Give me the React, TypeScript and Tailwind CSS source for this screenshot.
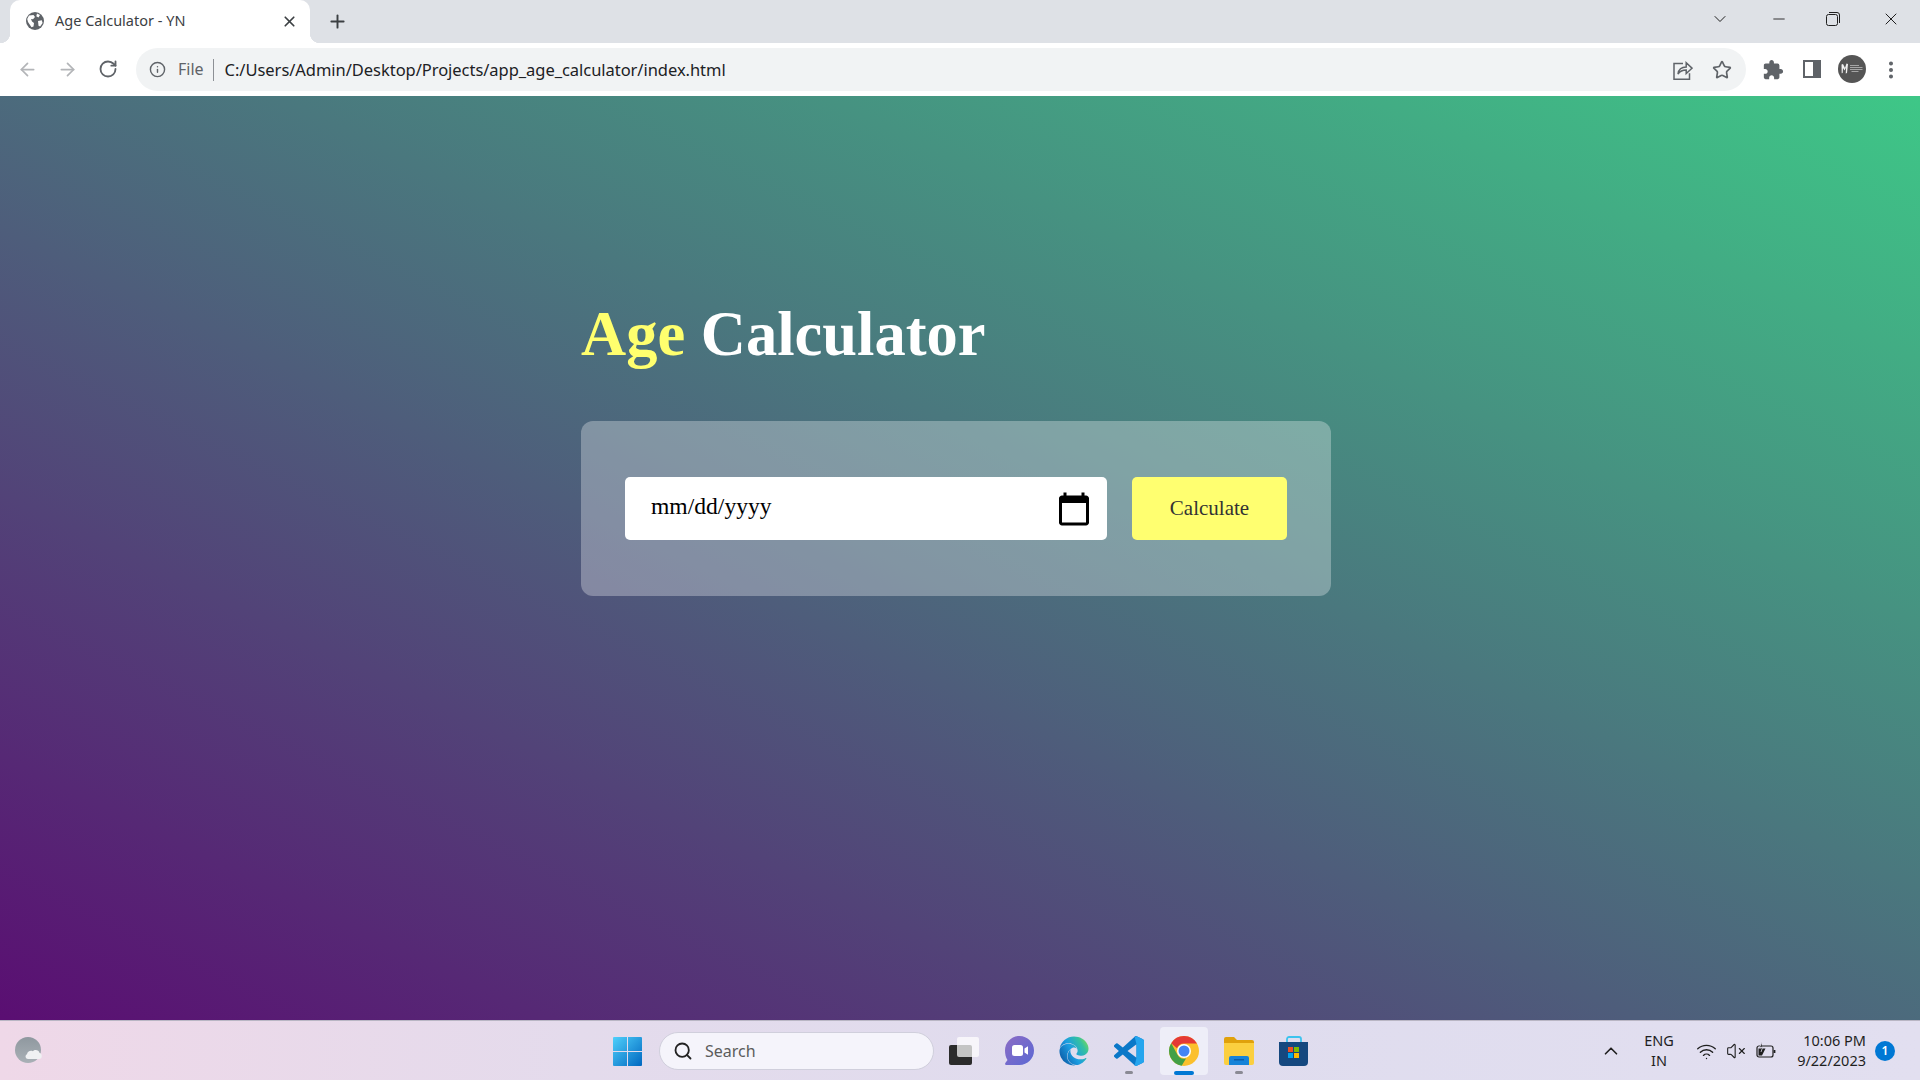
import { ArrowLeft, ArrowRight, ChevronDown, ChevronUp, Info, Minus, MoreVertical, Plus, RotateCw, Search, Star, VolumeX, Wifi, X } from 'lucide-react';
import { FaEdge } from 'react-icons/fa';

const uiFont = 'font-["Noto_Sans",sans-serif]';

function Globe() {
  return (
    <svg width="18" height="18" viewBox="0 0 18 18">
      <circle cx="9" cy="9" r="9" fill="#5f6368" />
      <path d="M3 3.5 7.5 3 9 5 7 7.2 5 7 6 9.5 8 11l-.5 3.5-2 .8L2 10 1.2 7zM11 1.5l3 1.500-1.500 2.500-2.200-1.200zM12 9l3.800-.8.8 2.800-2.500 3.500-1.600-.8z" fill="#ffffff" />
    </svg>
  );
}

function Share() {
  return (
    <svg width="20" height="20" viewBox="0 0 20 20" fill="none" stroke="#5f6368" strokeWidth="1.500">
      <path d="M10 3.500H1v15.700h15.500v-6" />
      <path d="M5 14c.6-4.600 4-7 8.200-7V2.700L19 8.200l-5.800 5.300v-3.600C9.700 9.900 7 11 5 14z" fill="#f1f3f4" />
    </svg>
  );
}

function PuzzleIcon() {
  return (
    <svg width="22" height="22" viewBox="0 0 24 24" fill="#5f6368">
      <path d="M20.500 11H19V7c0-1.100-.9-2-2-2h-4V3.500C13 2.120 11.880 1 10.500 1S8 2.120 8 3.500V5H4c-1.100 0-1.990.9-1.990 2v3.800H3.500c1.490 0 2.700 1.210 2.700 2.700s-1.210 2.700-2.700 2.700H2V20c0 1.100.9 2 2 2h3.800v-1.500c0-1.490 1.210-2.700 2.700-2.700 1.490 0 2.700 1.210 2.700 2.700V22H17c1.100 0 2-.9 2-2v-4h1.500c1.380 0 2.500-1.120 2.500-2.500S21.880 11 20.500 11z" />
    </svg>
  );
}

function CalendarIcon() {
  return (
    <svg width="36" height="36" viewBox="0 0 24 24" fill="#000000">
      <path d="M20 3h-1V1h-2v2H7V1H5v2H4c-1.100 0-2 .9-2 2v16c0 1.100.9 2 2 2h16c1.100 0 2-.9 2-2V5c0-1.100-.9-2-2-2zm0 18H4V8h16v13z" />
    </svg>
  );
}

function Avatar() {
  return (
    <svg width="28" height="28" viewBox="0 0 28 28">
      <circle cx="14" cy="14" r="14" fill="#555555" />
      <path d="M3.500 9.500 5 9l2 4 1.500-4.500 1.500.5-1 9-1.300.5.4-6L6.500 15.500 5 13l-.3 5-1 .3z" fill="#f2f2f2" />
      <path d="M12 10.500h9M12 12.500h12.500M12 14.500h12.500M13.500 16.500h7" stroke="#c9c9c9" strokeWidth="0.700" />
    </svg>
  );
}

function WeatherIcon() {
  return (
    <svg width="30" height="28" viewBox="0 0 30 28">
      <defs>
        <linearGradient id="moon" x1="0" y1="0" x2="0" y2="1">
          <stop offset="0" stopColor="#8f989f" />
          <stop offset="1" stopColor="#a9b0b6" />
        </linearGradient>
      </defs>
      <circle cx="13" cy="13" r="13" fill="url(#moon)" />
      <path d="M13 22c-2.500 0-3.500-3.500-1-4.700.3-2.800 3.500-4.200 5.800-3 2-2.500 6.300-1.300 6.800 1.800 2.700.4 3.300 5.900-.4 5.900z" fill="#f0f1f3" />
    </svg>
  );
}

function StartLogo() {
  return (
    <svg width="29" height="29" viewBox="0 0 29 29">
      <defs>
        <linearGradient id="win" x1="0" y1="0" x2="1" y2="1">
          <stop offset="0" stopColor="#4fd0fb" />
          <stop offset="1" stopColor="#0067c0" />
        </linearGradient>
      </defs>
      <path d="M1 0h13v14H0V1a1 1 0 0 1 1-1zM15 0h13a1 1 0 0 1 1 1v13H15zM0 15h14v14H1a1 1 0 0 1-1-1zM15 15h14v13a1 1 0 0 1-1 1H15z" fill="url(#win)" />
    </svg>
  );
}

function TaskView() {
  return (
    <svg width="30" height="28" viewBox="0 0 30 28">
      <rect x="0" y="8" width="23" height="20" rx="2" fill="#2b2b2b" />
      <rect x="8" y="0" width="22" height="20" rx="2" fill="#ffffff" fillOpacity="0.72" />
    </svg>
  );
}

function ChatIcon() {
  return (
    <svg width="30" height="30" viewBox="0 0 30 30">
      <defs>
        <linearGradient id="chat" x1="0" y1="0" x2="1" y2="1">
          <stop offset="0" stopColor="#8c6cc4" />
          <stop offset="1" stopColor="#5a68d4" />
        </linearGradient>
      </defs>
      <path d="M15.500 0C23.500 0 30 6.500 30 14.500S23.500 29 15.500 29H2.500c-1.300 0-1.800-1.400-1-2.300L3.500 24C1.800 21.500 1 18 1 14.500 1 6.500 7.500 0 15.500 0z" fill="url(#chat)" />
      <rect x="8" y="9" width="11" height="11" rx="2.500" fill="#ffffff" />
      <path d="M20.500 12.500 24 10.300v8.400l-3.500-2.200z" fill="#ffffff" />
    </svg>
  );
}

function EdgeIcon() {
  return (
    <>
      <svg width="0" height="0" className="absolute">
        <defs>
          <linearGradient id="edge" x1="0" y1="0.8" x2="1" y2="0.2">
            <stop offset="0" stopColor="#0c59a4" />
            <stop offset="0.45" stopColor="#1b9de2" />
            <stop offset="0.8" stopColor="#35c1a0" />
            <stop offset="1" stopColor="#7ad85c" />
          </linearGradient>
        </defs>
      </svg>
      <FaEdge size={30} fill="url(#edge)" />
    </>
  );
}

function VsCode() {
  return (
    <svg width="30" height="30" viewBox="0 0 24 24">
      <path d="M23.150 2.587L18.210.21a1.494 1.494 0 0 0-1.705.29l-9.460 8.630-4.120-3.128a.999.999 0 0 0-1.276.057L.327 7.261A1 1 0 0 0 .326 8.740L3.899 12 .326 15.260a1 1 0 0 0 .001 1.479L1.650 17.940a.999.999 0 0 0 1.276.057l4.120-3.128 9.460 8.630a1.492 1.492 0 0 0 1.704.29l4.942-2.377A1.500 1.500 0 0 0 24 20.060V3.939a1.500 1.500 0 0 0-.85-1.352zm-5.146 14.861L10.826 12l7.178-5.448v10.896z" fill="#0a78c8" />
      <path d="M18 .1 16.500.5 18 6.550v10.900L16.500 23.500a1.492 1.492 0 0 0 1.700.29l4.950-2.377A1.500 1.500 0 0 0 24 20.060V3.940a1.500 1.500 0 0 0-.85-1.353L18.210.21z" fill="#25a5ee" />
    </svg>
  );
}

function ChromeIcon() {
  return (
    <svg width="30" height="30" viewBox="0 0 30 30">
      <circle cx="15" cy="15" r="15" fill="#fbc02d" />
      <path d="M15 0a15 15 0 0 1 13 7.500H15a7.500 7.500 0 0 0-7 4.800L2.200 7.200A15 15 0 0 1 15 0z" fill="#e53935" />
      <path d="M2.200 7.200 8.500 18.700a7.500 7.500 0 0 0 8.500 3.700L12.700 29.800A15 15 0 0 1 2.200 7.200z" fill="#43a047" />
      <circle cx="15" cy="15" r="7" fill="#ffffff" />
      <circle cx="15" cy="15" r="5.500" fill="#4285f4" />
    </svg>
  );
}

function FolderIcon() {
  return (
    <svg width="30" height="28" viewBox="0 0 30 28">
      <path d="M0 2a2 2 0 0 1 2-2h8l3 3h15a2 2 0 0 1 2 2v4H0z" fill="#e0a10b" />
      <path d="M0 6h30v20a2 2 0 0 1-2 2H2a2 2 0 0 1-2-2z" fill="#fbcf3f" />
      <path d="M5 28v-7a2 2 0 0 1 2-2h16a2 2 0 0 1 2 2v7z" fill="#1683d8" />
      <rect x="10" y="22" width="10" height="1.500" fill="#0b5da8" />
    </svg>
  );
}

function StoreIcon() {
  return (
    <svg width="30" height="30" viewBox="0 0 30 30">
      <path d="M8 7V3a2 2 0 0 1 2-2h10a2 2 0 0 1 2 2v4" fill="none" stroke="#3cc3ee" strokeWidth="1.800" />
      <path d="M0 6h29v20a4 4 0 0 1-4 4H4a4 4 0 0 1-4-4z" fill="#15487f" />
      <rect x="9" y="11" width="5" height="5" fill="#f25022" />
      <rect x="15" y="11" width="5" height="5" fill="#7fba00" />
      <rect x="9" y="17" width="5" height="5" fill="#00a4ef" />
      <rect x="15" y="17" width="5" height="5" fill="#ffb900" />
    </svg>
  );
}

function BatteryIcon() {
  return (
    <svg width="20" height="18" viewBox="0 0 20 18" fill="none" stroke="#1f1f1f" strokeWidth="1.200">
      <rect x="1" y="4" width="16" height="11" rx="2" />
      <path d="M18.500 8v3" strokeWidth="1.800" />
      <path d="M2.500 13.500V6.500h7l-3.500 7z" fill="#1f1f1f" stroke="none" />
      <path d="M6 0 3.500 5.500h3L5 10" fill="#1f1f1f" stroke="#e2dff0" strokeWidth="0.800" />
    </svg>
  );
}

function TaskbarSlot({ children, dot }: { children: React.ReactNode; dot?: boolean }) {
  return (
    <div className="relative flex h-12 w-[48px] items-center justify-center">
      {children}
      {dot && <span className="absolute bottom-[1px] h-[3px] w-[8px] rounded-full bg-[#8a8a94]" />}
    </div>
  );
}

export default function App() {
  return (
    <div className={`flex h-screen w-full flex-col overflow-hidden ${uiFont}`}>
      {/* Tab strip */}
      <div className="flex h-[43px] shrink-0 items-center bg-[#dee1e6]">
        <div className="relative ml-[10px] flex h-full w-[300px] items-center rounded-t-[10px] bg-white pb-[2px] pl-[16px] before:absolute before:bottom-0 before:left-[-10px] before:h-[10px] before:w-[10px] before:bg-[radial-gradient(circle_at_0_0,transparent_10px,white_10.5px)] after:absolute after:bottom-0 after:right-[-10px] after:h-[10px] after:w-[10px] after:bg-[radial-gradient(circle_at_100%_0,transparent_10px,white_10.5px)]">
          <Globe />
          <span className="ml-[11px] text-[14.500px] text-[#3c4043]">Age Calculator - YN</span>
          <X className="absolute right-[12px] top-[13px] text-[#3c4043]" size={17} strokeWidth={2.4} />
        </div>
        <Plus className="ml-[17px] text-[#3c4043]" size={21} strokeWidth={2.200} />
        <div className="ml-auto flex items-center pb-[5px] text-[#1f1f1f]">
          <ChevronDown size={20} strokeWidth={1.200} className="mr-[40px]" />
          <Minus size={18} strokeWidth={1.200} className="mr-[38px]" />
          <svg width="14" height="14" viewBox="0 0 14 14" fill="none" stroke="#1f1f1f" className="mr-[41px]">
            <rect x="0.500" y="2.500" width="11" height="11" rx="2" />
            <path d="M3 .5h8a2.500 2.500 0 0 1 2.500 2.500v8" />
          </svg>
          <X size={20} strokeWidth={1.200} className="mr-[19px]" />
        </div>
      </div>

      {/* Toolbar */}
      <div className="flex h-[53px] shrink-0 items-start bg-white pt-[5px]">
        <ArrowLeft className="ml-[17px] mt-[11px] text-[#b3b5b8]" size={21} strokeWidth={2} />
        <ArrowRight className="ml-[19px] mt-[11px] text-[#b3b5b8]" size={21} strokeWidth={2} />
        <RotateCw className="ml-[20px] mt-[11px] text-[#5f6368]" size={20} strokeWidth={2.200} />
        <div className="ml-[18px] flex h-[43px] w-[1610px] items-center rounded-full bg-[#f1f3f4] pl-[13px] pr-[14px]">
          <Info className="text-[#5f6368]" size={17} strokeWidth={2} />
          <span className="ml-[12px] pb-[1px] text-[16px] text-[#5f6368]">File</span>
          <span className="ml-[9px] h-[22px] w-px bg-[#8d9095]" />
          <span className="ml-[11px] pt-[1px] text-[16.500px] tracking-[-0.04px] text-[#202124]">C:/Users/Admin/Desktop/Projects/app_age_calculator/index.html</span>
          <span className="ml-auto mr-[19px]">
            <Share />
          </span>
          <Star className="text-[#5f6368]" size={20} strokeWidth={2} />
        </div>
        <span className="ml-[16px] mt-[11px]">
          <PuzzleIcon />
        </span>
        <svg width="18" height="18" viewBox="0 0 18 18" className="ml-[19px] mt-[12px]">
          <path d="M0 0h18v18H0zM2 2v14h8V2z" fill="#5f6368" fillRule="evenodd" />
        </svg>
        <span className="ml-[17px] mt-[7px]">
          <Avatar />
        </span>
        <MoreVertical className="ml-[14px] mt-[11px] text-[#5f6368]" size={22} strokeWidth={2.400} />
      </div>

      {/* Page */}
      <main className="min-h-0 flex-1 bg-[linear-gradient(to_top_right,#5a0e72,#3ec787)] pl-[581px] pt-[202px] font-['Liberation_Serif',serif]">
        <h1 className="mb-[51px] text-[62.500px] font-bold leading-[72px] text-white">
          <span className="text-[#ffff6e]">Age</span> Calculator
        </h1>
        <div className="flex w-[750px] gap-[25px] rounded-[12px] bg-white/30 px-[44px] py-[56px]">
          <div className="flex h-[63px] w-[482px] items-center justify-between rounded-[5px] bg-white pl-[26px] pr-[15px] text-[23.600px] text-black">
            <span className="pb-[3px]">mm/dd/yyyy</span>
            <CalendarIcon />
          </div>
          <button className="h-[63px] w-[155px] rounded-[5px] bg-[#ffff70] text-[21px] text-[#333333]">Calculate</button>
        </div>
      </main>

      {/* Taskbar */}
      <div className="flex h-[60px] shrink-0 items-center border-t border-[#b9b6c4] bg-[linear-gradient(to_right,#efd8e8,#e4dbec_30%,#dfdcee_60%,#e2dff0)] pt-[1px]">
        <span className="ml-[15px]">
          <WeatherIcon />
        </span>
        <span className="ml-[568px]">
          <StartLogo />
        </span>
        <div className="ml-[17px] flex h-[38px] w-[275px] items-center rounded-full border border-[#d0cfdc] bg-[#f5f4fb] pl-[13px]">
          <Search className="text-[#222222]" size={20} strokeWidth={2.200} />
          <span className="ml-[12px] text-[16px] text-[#5c5c5c]">Search</span>
        </div>
        <div className="ml-[6px] flex items-center gap-[7px]">
          <TaskbarSlot>
            <TaskView />
          </TaskbarSlot>
          <TaskbarSlot>
            <ChatIcon />
          </TaskbarSlot>
          <TaskbarSlot>
            <EdgeIcon />
          </TaskbarSlot>
          <TaskbarSlot dot>
            <VsCode />
          </TaskbarSlot>
          <div className="relative flex h-12 w-[48px] items-center justify-center rounded-[4px] bg-[#eeeef8]">
            <ChromeIcon />
            <span className="absolute bottom-[0px] h-[4px] w-[20px] rounded-full bg-[#0078d4]" />
          </div>
          <TaskbarSlot dot>
            <FolderIcon />
          </TaskbarSlot>
          <TaskbarSlot>
            <StoreIcon />
          </TaskbarSlot>
        </div>
        <ChevronUp className="ml-[282px] text-[#1f1f1f]" size={22} strokeWidth={1.800} />
        <div className="ml-[12px] flex w-[50px] flex-col items-center pb-[2px] text-[14.500px] leading-[20px] text-[#1f1f1f]">
          <span>ENG</span>
          <span>IN</span>
        </div>
        <Wifi className="ml-[12px] text-[#1f1f1f]" size={21} strokeWidth={1.600} />
        <VolumeX className="ml-[9px] text-[#1f1f1f]" size={20} strokeWidth={1.300} />
        <span className="ml-[10px]">
          <BatteryIcon />
        </span>
        <div className="ml-[14px] flex w-[76px] flex-col items-end pb-[3px] text-[14.500px] leading-[20px] text-[#1f1f1f]">
          <span>10:06 PM</span>
          <span>9/22/2023</span>
        </div>
        <span className="ml-[9px] flex h-[20px] w-[20px] items-center justify-center rounded-full bg-[#0078d4] text-[12px] font-semibold text-white">1</span>
      </div>
    </div>
  );
}
